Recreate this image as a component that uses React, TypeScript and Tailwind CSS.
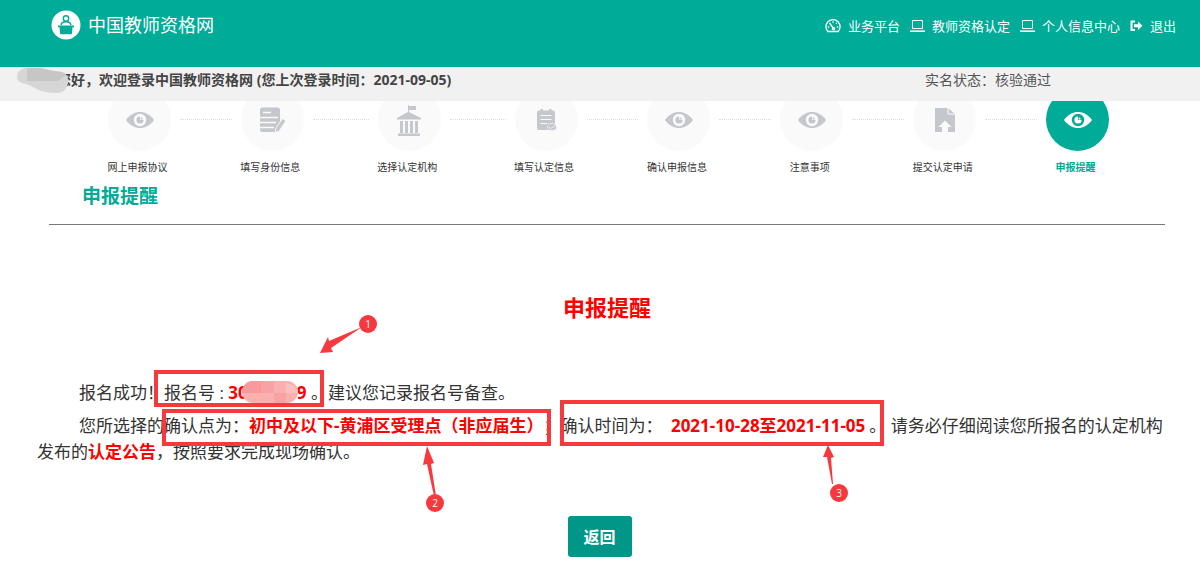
import type { ReactNode } from 'react';

type IconName = 'eye' | 'form' | 'bank' | 'clipboard' | 'upload';

const steps: { label: string; icon: IconName; active?: boolean; wide?: boolean }[] = [
  { label: '网上申报协议', icon: 'eye' },
  { label: '填写身份信息', icon: 'form' },
  { label: '选择认定机构', icon: 'bank', wide: true },
  { label: '填写认定信息', icon: 'clipboard', wide: true },
  { label: '确认申报信息', icon: 'eye' },
  { label: '注意事项', icon: 'eye' },
  { label: '提交认定申请', icon: 'upload' },
  { label: '申报提醒', icon: 'eye', active: true },
];

function StepIcon({ name }: { name: IconName }) {
  switch (name) {
    case 'eye':
      return (
        <svg viewBox="0 0 32 32" className="w-8 h-8" fill="none">
          <path d="M2 16C6 10.500 11 8 16 8s10 2.500 14 8c-4 5.500-9 8-14 8S6 21.500 2 16z" fill="currentColor" />
          <circle cx="16" cy="16" r="6.200" fill="var(--hole)" />
          <circle cx="16" cy="16" r="3.600" fill="currentColor" />
          <path d="M16 15.800V12h4v3.800z" fill="var(--hole)" />
          <circle cx="17.500" cy="14.500" r="1" fill="currentColor" />
        </svg>
      );
    case 'form':
      return (
        <svg viewBox="0 0 32 32" className="w-8 h-8" fill="none">
          <rect x="4" y="3.500" width="20" height="24.500" rx="2.500" fill="currentColor" />
          <path d="M7 8.500h8M4 13.500h18M4 18.500h16M4 23.500h14" stroke="var(--hole)" strokeWidth="1.500" />
          <path d="M19 29l1-5 6.500-9.500 3.500 2.200-6.500 9.800z" fill="currentColor" stroke="var(--hole)" />
        </svg>
      );
    case 'bank':
      return (
        <svg viewBox="0 0 32 32" className="w-8 h-8" fill="currentColor">
          <path d="M15 1h1v1h7v4h-7v2l12 6v1.500H4V14l11-6zM7 17h3v12H7zM12 17h3v12h-3zM17 17h3v12h-3zM22 17h3v12h-3zM5 29.500h22V32H5z" />
        </svg>
      );
    case 'clipboard':
      return (
        <svg viewBox="0 0 32 32" className="w-8 h-8" fill="none">
          <path d="M9 6.500h1.500V5H13v1.500h6V5h2.500v1.500H23a2 2 0 0 1 2 2V24a2 2 0 0 1-2 2H9a2 2 0 0 1-2-2V8.500a2 2 0 0 1 2-2z" fill="currentColor" />
          <path d="M10.500 11.500h11M10.500 15.500h11M10.500 19.500h7" stroke="var(--hole)" strokeWidth="1.200" />
          <ellipse cx="22" cy="23" rx="4.500" ry="3.500" fill="currentColor" stroke="var(--hole)" strokeWidth="0.600" />
          <path d="M19 23l2 1.500 4.500-3.500" stroke="var(--hole)" strokeWidth="0.800" />
        </svg>
      );
    case 'upload':
      return (
        <svg viewBox="0 0 32 32" className="w-8 h-8" fill="none">
          <path d="M6 4h12.500v6.500H26V28h-7v-5h3.500L16 16.500 9.500 23H13v5H6z" fill="currentColor" />
          <path d="M19.500 4.500l6 5h-6z" fill="currentColor" />
        </svg>
      );
  }
}

function GaugeIcon() {
  return (
    <svg viewBox="0 0 16 14" className="w-4 h-[14px]" fill="none" stroke="currentColor" strokeWidth="1.300">
      <path d="M2.800 12.500h10.400c1-1.200 1.900-2.600 1.900-4.700a7.100 7.100 0 0 0-14.200 0c0 2.100.900 3.500 1.900 4.700z" />
      <path d="M4.500 4l4 5.500M8 2.200v1.500M11.800 4l-.800.900M2.800 8h1.400M11.800 8h1.400" />
      <circle cx="8.500" cy="9.700" r="1.100" />
    </svg>
  );
}

function LaptopIcon() {
  return (
    <svg viewBox="0 0 15 14" className="w-[15px] h-[14px]" fill="none" stroke="currentColor">
      <path d="M2.500 1.500h10v8h-10z" />
      <path d="M0 12.200h15" strokeWidth="1.600" />
    </svg>
  );
}

function LogoutIcon() {
  return (
    <svg viewBox="0 0 13 14" className="w-[13px] h-[14px]" fill="none">
      <path d="M5 2.500H1.500v8.500H5" stroke="currentColor" strokeWidth="2" />
      <path d="M4 5.300h4V2.500l4.500 4.300L8 11V8.300H4z" fill="currentColor" />
    </svg>
  );
}

function NavLink({ icon, children }: { icon: ReactNode; children: ReactNode }) {
  return (
    <a href="#" className="flex items-center gap-[7px]">
      {icon}
      <span>{children}</span>
    </a>
  );
}

function Header() {
  return (
    <header className="bg-[#00ab98] text-white h-[67px] pl-[51px] pr-6 pt-[9px] flex justify-between items-start">
      <div className="flex items-center gap-[7px]">
        <svg viewBox="0 0 30 30" className="w-[30px] h-[30px]" fill="none">
          <circle cx="15" cy="15" r="14.500" fill="white" />
          <circle cx="15" cy="8.500" r="2.700" stroke="#00ab98" strokeWidth="1.400" />
          <path d="M10.200 15c0-2.300 2-3.300 4.800-3.300s4.800 1 4.800 3.300" stroke="#00ab98" strokeWidth="1.400" />
          <path d="M7 15.500h16v1.800h-1.500l-.700 7H9.200l-.700-7H7z" fill="#00ab98" />
        </svg>
        <span className="text-[18px] leading-8">中国教师资格网</span>
      </div>
      <nav className="flex items-center gap-[10px] text-[13px] leading-[34px]">
        <NavLink icon={<GaugeIcon />}>业务平台</NavLink>
        <NavLink icon={<LaptopIcon />}>教师资格认定</NavLink>
        <NavLink icon={<LaptopIcon />}>个人信息中心</NavLink>
        <NavLink icon={<LogoutIcon />}>退出</NavLink>
      </nav>
    </header>
  );
}

function Stepper() {
  return (
    <ol className="flex pl-[108px] pr-[91px]">
      {steps.map((step, i) => (
        <li
          key={step.label}
          className={i === 0 ? 'flex' : step.wide ? 'flex flex-[137_1_0%]' : 'flex flex-[133_1_0%]'}
        >
          {i > 0 && <span className="flex-1 mx-[9px] mt-[31px] h-px border-t border-dotted border-[#dcdcdc]" />}
          <div className="w-[63px] flex flex-col items-center">
            <div
              className={
                step.active
                  ? 'w-[63px] h-[63px] rounded-full flex items-center justify-center bg-[#00ab98] text-white [--hole:#00ab98]'
                  : 'w-[63px] h-[63px] rounded-full flex items-center justify-center bg-[#fafafa] text-[#c4c7cc] [--hole:#fafafa]'
              }
            >
              <StepIcon name={step.icon} />
            </div>
            <span
              className={
                step.active
                  ? 'mt-2 pr-1 text-[10px] leading-4 whitespace-nowrap font-bold text-[#00ab98]'
                  : 'mt-2 pr-1 text-[10px] leading-4 whitespace-nowrap text-[#333]'
              }
            >
              {step.label}
            </span>
          </div>
        </li>
      ))}
    </ol>
  );
}

function Mark({ n, place }: { n: number; place: string }) {
  return (
    <span
      className={`absolute ${place} w-[18px] h-[18px] rounded-full bg-[#f5393d] text-white text-[10px] leading-[18px] text-center`}
    >
      {n}
    </span>
  );
}

// Numbered marks and frames that lie over the notice text
function Annotations() {
  return (
    <div className="absolute inset-0 pointer-events-none">
      <div className="absolute left-[154px] top-[370px] w-[170px] h-[37px] border-4 border-[#f5393d]" />
      <div className="absolute left-[162px] top-[409px] w-[389px] h-[37px] border-4 border-[#f5393d]" />
      <div className="absolute left-[560px] top-[400px] w-[324px] h-[46px] border-4 border-[#f5393d]" />
      <svg className="absolute left-0 top-0 w-[1200px] h-[576px]" viewBox="0 0 1200 576" fill="#f5393d">
        <path d="M362 327l-33 14-1-4-8 16 13-1-2-4z" />
        <path d="M434 496l-7-32-4 1 4-19 7 17-3 1 5 32z" />
        <path d="M832 484l-5-27-4 0 5-12 6 12-3 1 2 26z" />
      </svg>
      <Mark n={1} place="left-[359px] top-[315px]" />
      <Mark n={2} place="left-[426px] top-[494px]" />
      <Mark n={3} place="left-[830px] top-[484px]" />
    </div>
  );
}

export default function App() {
  return (
    <div className="relative min-h-[576px] overflow-hidden bg-white text-[#333] font-['Open_Sans','Noto_Sans_CJK_SC',sans-serif]">
      <div className="relative z-10">
        <Header />
        <div className="relative h-[34px] bg-[#f1f1f1] border-t border-[#d9f3f0] pl-[57px] pr-[149px] flex justify-between text-[14px] leading-6">
          <strong className="text-[#444]">您好，欢迎登录中国教师资格网 (您上次登录时间：2021-09-05)</strong>
          <span className="text-[#555]">实名状态：核验通过</span>
          <svg viewBox="0 0 52 26" className="absolute left-[17px] top-0 w-[52px] h-[26px]">
            <path d="M10 0h14c8 2 12 3 20 4 5 1 7 4 7 9s-3 12-11 12c-12 0-20-3-28-8C5 15 0 14 0 9S4 0 10 0z" fill="#d6d6d6" />
            <path d="M10 0h14c8 2 12 3 20 4 2 0 4 1 5 3l-8 6H10z" fill="#c6c6c6" />
          </svg>
        </div>
      </div>

      <main>
        <div className="-mt-[13px]">
          <Stepper />
        </div>

        <div className="ml-[49px] mr-[35px] pl-[33px] pt-[5px] h-[50px] border-b border-[#777]">
          <h1 className="text-[19px] leading-8 font-bold text-[#00ab98]">申报提醒</h1>
        </div>

        <section className="pl-[37px] pr-[30px]">
          <h2 className="mt-[66px] ml-[7px] text-center text-[22px] leading-8 font-bold text-[#f00]">申报提醒</h2>
          <div className="mt-[53px] text-[17px] leading-[26px] [text-spacing-trim:space-all]">
            <p className="indent-[42px] pt-1 pb-[7px]">
              报名成功！报名号 :{' '}
              <b className="text-[#f00]">
                30
                <span className="relative inline-block w-[49px] h-[14px] indent-0">
                  <svg viewBox="0 0 56 22" className="absolute -left-[6px] -top-[4px] w-[56px] h-[22px]">
                    <rect width="56" height="22" rx="11" fill="#fbb0b0" />
                    <path d="M11 0h8v12H0v-1A11 11 0 0 1 11 0z" fill="#f99a9a" />
                    <path d="M19 0h13v12H19zM32 12h12v10H32z" fill="#f7a3a6" />
                    <path d="M44 2c7 1 12 5 12 10H44z" fill="#fcc0c0" />
                  </svg>
                </span>
                9
              </b>{' '}
              。建议您记录报名号备查。
            </p>
            <p className="indent-[42px]">
              您所选择的确认点为：<b className="text-[#f00]">初中及以下-黄浦区受理点（非应届生）</b>；确认时间为：{' '}
              <b className="mx-1 text-[#f00]">2021-10-28至2021-11-05</b>。 请务必仔细阅读您所报名的认定机构发布的
              <b className="text-[#f00]">认定公告</b>，按照要求完成现场确认。
            </p>
          </div>
          <div className="mt-[51px] pr-2 text-center">
            <button type="button" className="w-16 h-[41px] rounded-[3px] bg-[#009688] text-white text-[16px] font-bold">
              返回
            </button>
          </div>
        </section>
      </main>

      <Annotations />
    </div>
  );
}
